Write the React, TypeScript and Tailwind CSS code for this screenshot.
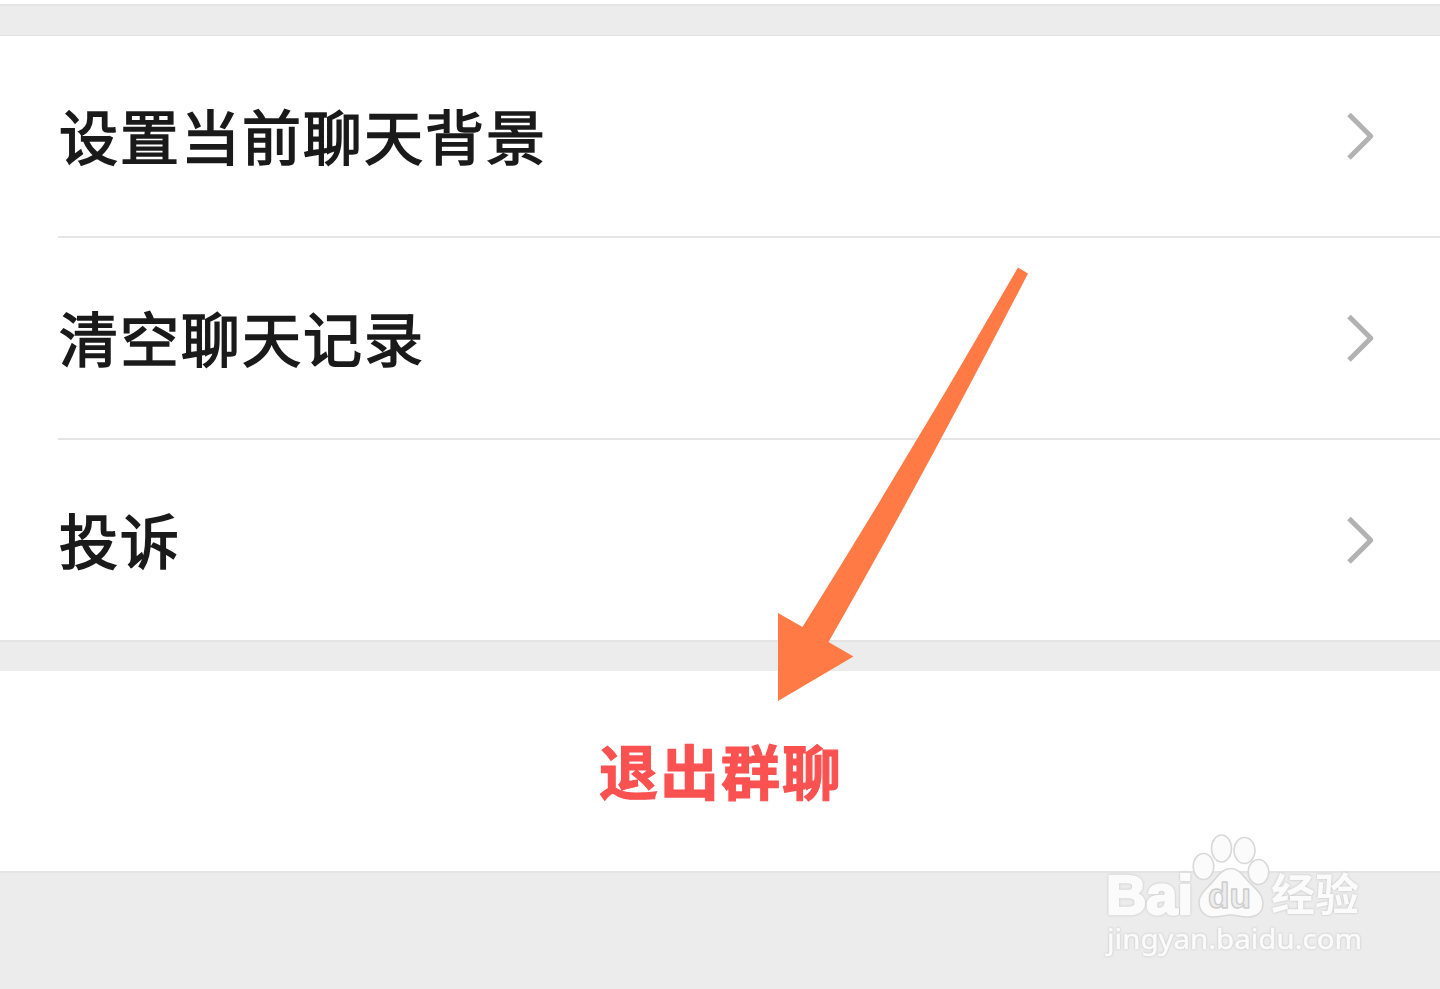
import { clsx } from 'clsx';

interface SettingRowProps {
  label: string;
  divided?: boolean;
}

const ROWS = ['设置当前聊天背景', '清空聊天记录', '投诉'];

function Chevron() {
  return (
    <svg className="h-[50px] w-8 flex-shrink-0" viewBox="0 0 32 50" fill="none">
      <path d="M5 3.5L26.8 25.2L5 47" stroke="#b2b2b2" strokeWidth="5" strokeLinejoin="round" />
    </svg>
  );
}

function SettingRow({ label, divided }: SettingRowProps) {
  return (
    <div
      className={clsx(
        'ml-[58px] flex h-[202px] items-center justify-between border-b-2 pr-16',
        divided ? 'border-[#e5e5e5]' : 'border-transparent'
      )}
    >
      <span className="pb-[3px] pl-px text-[59px] leading-none tracking-[2px] text-[#1a1a1a] [-webkit-text-stroke:1.6px_#1a1a1a]">
        {label}
      </span>
      <Chevron />
    </div>
  );
}

// Orange pointer towards the exit button
function PointerArrow() {
  return (
    <svg className="absolute left-[770px] top-[260px] h-[450px] w-[270px]" viewBox="770 260 270 450">
      <path d="M1018 267.5L1028 273.5Q924 475 828.5 642L853.5 656.5L778 701V613L802.5 627Q913 450 1018 267.5Z" fill="#ff7a45" />
    </svg>
  );
}

function Watermark() {
  return (
    <svg
      className="absolute left-[1090px] top-[820px] h-[150px] w-[290px]"
      viewBox="0 0 290 150"
      fill="#fbfbfb"
      stroke="#d9d9d9"
      strokeWidth="1.6"
      strokeLinejoin="round"
    >
      <text
        className="[filter:drop-shadow(0_0_1px_#bdbdbd)]"
        x="16"
        y="94"
        fontFamily="Liberation Sans, sans-serif"
        fontSize="56"
        fontWeight="700"
        stroke="#fbfbfb"
        strokeWidth="2.6"
        textLength="87"
        lengthAdjust="spacingAndGlyphs"
      >
        Bai
      </text>
      <ellipse cx="113.5" cy="46.5" rx="10.3" ry="13" />
      <ellipse cx="131.5" cy="28.5" rx="10" ry="13.5" />
      <ellipse cx="154.5" cy="30.5" rx="10.5" ry="13" />
      <ellipse cx="168.5" cy="52" rx="10.3" ry="12.5" />
      <path d="M141 48.5C148 48.5 152 54 157 60C164 68 173 73 173 83C173 93 166 97 157 97C150 97 147 95 141 95C135 95 130 97 123 97C114 97 109 90 109 82C109 73 119 67 125 59C130 53 134 48.5 141 48.5Z" />
      <text
        x="118"
        y="88"
        fontFamily="Liberation Sans, sans-serif"
        fontSize="35"
        fontWeight="700"
        fill="#ededed"
        stroke="#cdcdcd"
        strokeWidth="1.4"
        textLength="43"
        lengthAdjust="spacingAndGlyphs"
      >
        du
      </text>
      <text
        className="[filter:drop-shadow(0_0_1px_#bdbdbd)]"
        x="181"
        y="91"
        fontFamily="Noto Sans CJK SC, sans-serif"
        fontSize="44"
        fontWeight="700"
        stroke="none"
      >
        经验
      </text>
      <text
        className="[filter:drop-shadow(0_0_1px_#bdbdbd)]"
        x="17"
        y="129"
        fontFamily="Noto Sans, sans-serif"
        fontSize="28"
        stroke="#fbfbfb"
        strokeWidth="0.6"
        textLength="255"
        lengthAdjust="spacingAndGlyphs"
      >
        jingyan.baidu.com
      </text>
    </svg>
  );
}

export default function App() {
  return (
    <div className="relative flex h-[989px] w-[1440px] flex-col overflow-hidden bg-white font-['Noto_Sans_CJK_SC',sans-serif]">
      <div className="mt-1 h-8 border-b border-t-2 border-b-[#e1e1e1] border-t-[#e4e4e4] bg-[#ececec]" />

      <div className="h-[604px]">
        {ROWS.map((label, i) => (
          <SettingRow key={label} label={label} divided={i < ROWS.length - 1} />
        ))}
      </div>

      <div className="h-[31px] border-t-2 border-[#e4e4e4] bg-[#ececec]" />

      <button className="h-[200px] pb-1 pl-[2px] text-center text-[59px] font-bold leading-none tracking-[2px] text-[#fa5151] [-webkit-text-stroke:1.2px_#fa5151]">
        退出群聊
      </button>

      <div className="flex-1 border-t-2 border-[#e4e4e4] bg-[#ececec]" />

      <PointerArrow />
      <Watermark />
    </div>
  );
}
